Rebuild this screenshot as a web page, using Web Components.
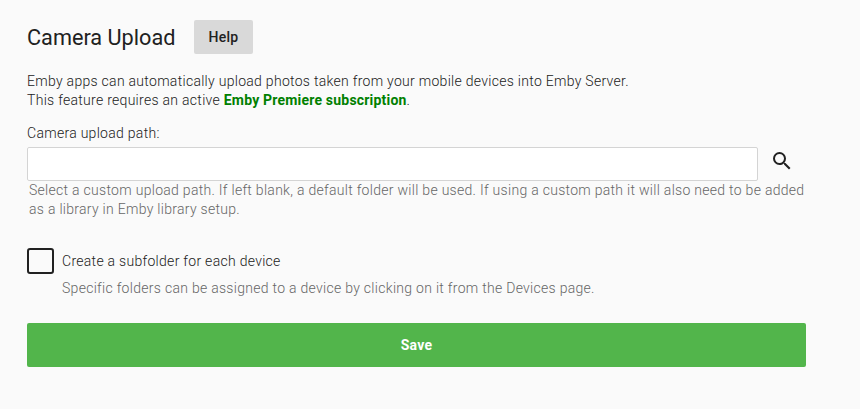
<!DOCTYPE html>
<html lang="en">
<head>
<meta charset="utf-8">
<title>Camera Upload</title>
<style>
  body {
    margin: 0;
    background: #fafafa;
    color: #212121;
    font: 300 14px/19px Roboto, "Liberation Sans", sans-serif;
    letter-spacing: 0.29px;
  }
</style>
</head>
<body>
<camera-upload-page></camera-upload-page>

<script>
class SectionTitle extends HTMLElement {
  constructor() {
    super();
    this.attachShadow({ mode: 'open' });
  }

  connectedCallback() {
    this.shadowRoot.innerHTML = `
      <style>
        :host { display: flex; align-items: center; gap: 18px; height: 34px; }
        h2 { width: 149px; margin: 0; font-size: 21.7px; font-weight: 400; letter-spacing: 0; white-space: nowrap; }
        a {
          box-sizing: border-box;
          width: 59px;
          height: 34px;
          border-radius: 2px;
          background: #d9d9d9;
          font-weight: 500;
          letter-spacing: 0.25px;
          line-height: 34px;
          text-align: center;
        }
      </style>
      <h2><slot></slot></h2>
      <a>Help</a>
    `;
  }
}

class PathField extends HTMLElement {
  constructor() {
    super();
    this.attachShadow({ mode: 'open' });
  }

  connectedCallback() {
    this.shadowRoot.innerHTML = `
      <style>
        :host { display: block; }
        label { display: block; margin-bottom: 4px; }
        .row { display: flex; align-items: flex-start; }
        input {
          flex: 1;
          box-sizing: border-box;
          height: 34px;
          border: 1px solid #d4d4d4;
          border-radius: 2px;
          background: #fff;
        }
        button {
          display: flex;
          justify-content: center;
          width: 48px;
          padding: 2px 0 0;
          border: 0;
          background: none;
          color: #212121;
        }
        svg { width: 24px; height: 24px; fill: currentColor; }
        .hint { padding-left: 2px; color: #666; white-space: nowrap; }
      </style>
      <label for="path">${this.getAttribute('label')}</label>
      <div class="row">
        <input id="path" type="text">
        <button aria-label="Browse">
          <svg viewBox="0 0 24 24"><path d="M15.5 14h-.79l-.28-.27A6.471 6.471 0 0 0 16 9.5 6.5 6.5 0 1 0 9.5 16c1.61 0 3.09-.59 4.23-1.57l.27.28v.79l5 4.99L20.49 19l-4.99-5zm-6 0C7.01 14 5 11.99 5 9.5S7.01 5 9.5 5 14 7.01 14 9.5 11.99 14 9.5 14z"/></svg>
        </button>
      </div>
      <div class="hint"><slot></slot></div>
    `;
  }
}

class CheckOption extends HTMLElement {
  constructor() {
    super();
    this.attachShadow({ mode: 'open' });
  }

  connectedCallback() {
    this.shadowRoot.innerHTML = `
      <style>
        :host { display: block; }
        label { display: flex; align-items: center; gap: 8px; height: 26px; }
        input {
          appearance: none;
          box-sizing: border-box;
          width: 27px;
          height: 26px;
          margin: 0;
          border: 2px solid #212121;
          border-radius: 3px;
        }
        .hint { margin-top: 5px; padding-left: 35px; color: #666; }
      </style>
      <label><input type="checkbox"><span>${this.getAttribute('label')}</span></label>
      <div class="hint"><slot></slot></div>
    `;
  }
}

class SaveButton extends HTMLElement {
  constructor() {
    super();
    this.attachShadow({ mode: 'open' });
  }

  connectedCallback() {
    this.shadowRoot.innerHTML = `
      <style>
        :host { display: block; }
        button {
          display: block;
          width: 100%;
          height: 44px;
          padding: 0;
          border: 0;
          border-radius: 2px;
          background: #52b54b;
          color: #fff;
          font: inherit;
          font-weight: 700;
          letter-spacing: 0.25px;
        }
      </style>
      <button type="button"><slot></slot></button>
    `;
  }
}

class CameraUploadPage extends HTMLElement {
  constructor() {
    super();
    this.attachShadow({ mode: 'open' });
  }

  connectedCallback() {
    this.shadowRoot.innerHTML = `
      <style>
        :host { display: block; width: 779px; padding: 20px 0 0 27px; }
        p { margin: 18px 0 14px; }
        a { color: #008000; font-weight: 700; letter-spacing: 0.2px; }
        check-option { margin-top: 29px; }
        save-button { margin-top: 25px; }
      </style>
      <section-title>Camera Upload</section-title>
      <p>
        Emby apps can automatically upload photos taken from your mobile devices into Emby Server.<br>
        This feature requires an active <a>Emby Premiere subscription</a>.
      </p>
      <path-field label="Camera upload path:">Select a custom upload path. If left blank, a default folder will be used. If using a custom path it will also need to be added<br>as a library in Emby library setup.</path-field>
      <check-option label="Create a subfolder for each device">Specific folders can be assigned to a device by clicking on it from the Devices page.</check-option>
      <save-button>Save</save-button>
    `;
  }
}

customElements.define('section-title', SectionTitle);
customElements.define('path-field', PathField);
customElements.define('check-option', CheckOption);
customElements.define('save-button', SaveButton);
customElements.define('camera-upload-page', CameraUploadPage);
</script>
</body>
</html>
